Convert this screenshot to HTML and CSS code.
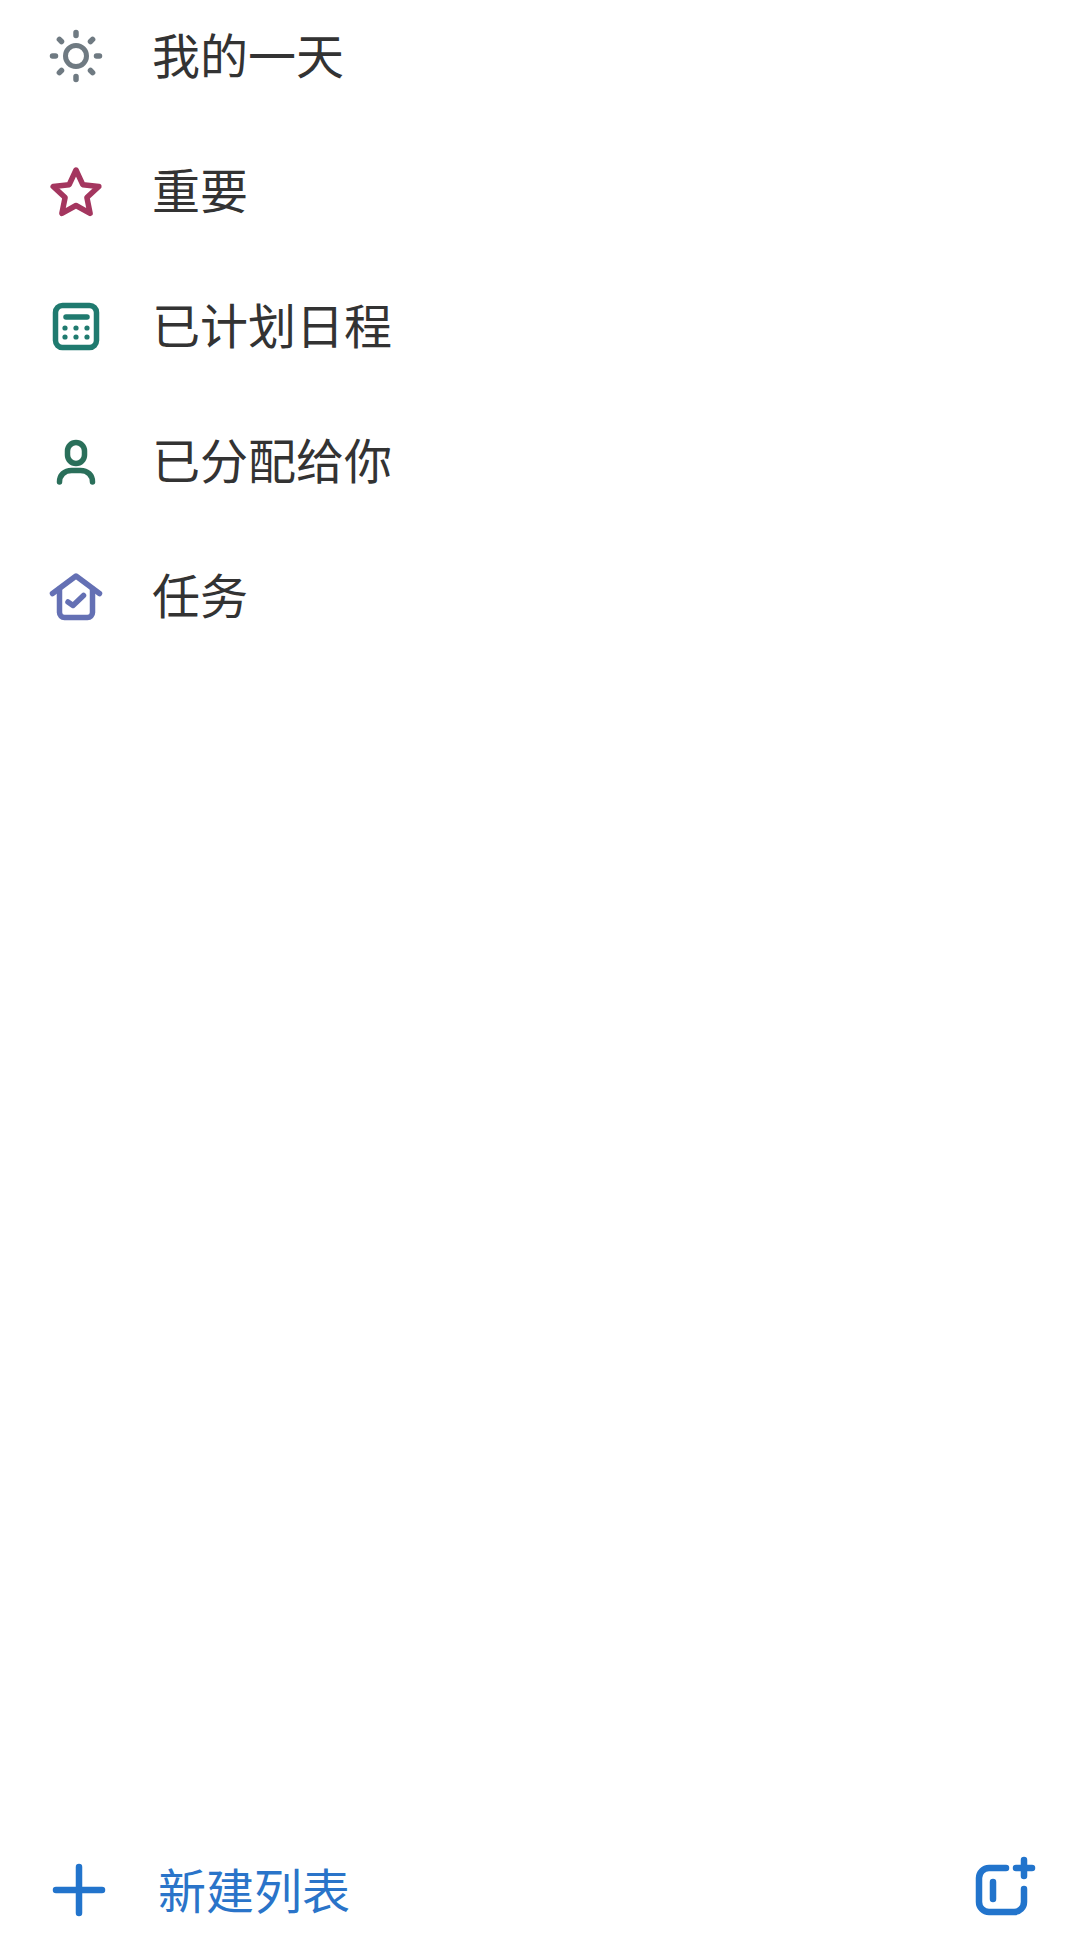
FILE: index.html
```html
<!DOCTYPE html>
<html lang="zh-CN">
<head>
<meta charset="utf-8">
<title>任务列表</title>
<link rel="stylesheet" href="styles.css">
</head>
<body>
<div class="page">
  <ul class="list">
    <li class="row">
      <svg class="icon sun" viewBox="0 0 60 60"><circle cx="30" cy="30" r="10.5"/><path d="M30 6.500v3M30 50.500v3M6.500 30h3M50.500 30h3M13.400 13.400l2.100 2.100M44.500 44.500l2.100 2.100M13.400 46.600l2.100-2.100M44.500 15.500l2.100-2.100"/></svg>
      <span class="label">我的一天</span>
    </li>
    <li class="row">
      <svg class="icon star" viewBox="0 0 60 60"><path d="M30 9l6.800 14.700 16 1.900-11.900 10.950 3.200 15.850L30 44.500l-14.100 7.900 3.200-15.850L7.200 25.600l16-1.900z"/></svg>
      <span class="label">重要</span>
    </li>
    <li class="row">
      <svg class="icon cal" viewBox="0 0 60 60"><rect x="9.500" y="9.500" width="41" height="42" rx="7"/><path class="cal-bar" d="M20 21h21"/><g class="dots"><circle cx="19" cy="32" r="2.600"/><circle cx="30" cy="32" r="2.600"/><circle cx="41" cy="32" r="2.600"/><circle cx="19" cy="41" r="2.600"/><circle cx="30" cy="41" r="2.600"/><circle cx="41" cy="41" r="2.600"/></g></svg>
      <span class="label">已计划日程</span>
    </li>
    <li class="row">
      <svg class="icon person" viewBox="0 0 60 60"><rect x="21.500" y="11.500" width="17" height="21" rx="8.500"/><path d="M13.500 51c0-7 5-11.500 12-11.500h9c7 0 12 4.500 12 11.500"/></svg>
      <span class="label">已分配给你</span>
    </li>
    <li class="row">
      <svg class="icon home" viewBox="0 0 60 60"><path d="M6.500 27.500L30 10l23.500 17.500"/><path d="M13.500 23v23.500a5 5 0 0 0 5 5h23a5 5 0 0 0 5-5V23"/><path d="M22 36l5 3.500 10.500-10"/></svg>
      <span class="label">任务</span>
    </li>
  </ul>
  <footer class="footer">
    <div class="add">
      <svg class="plus" viewBox="0 0 60 60"><path d="M30 7v46M7 30h46"/></svg>
      <span class="add-label">新建列表</span>
    </div>
    <svg class="group" viewBox="0 0 70 70"><path d="M36 13H19a10 10 0 0 0-10 10v24a10 10 0 0 0 10 10h25a10 10 0 0 0 10-10V34"/><path d="M23 27v17M46 13h16M54 5v16"/></svg>
  </footer>
</div>
</body>
</html>
```
FILE: styles.css
```css
* { box-sizing: border-box; }
html, body { margin: 0; padding: 0; background: #fff; }
body { font-family: "Noto Sans CJK SC", "Noto Sans", sans-serif; }

.page {
  width: 1080px;
  height: 1958px;
  overflow: hidden;
  display: flex;
  flex-direction: column;
  justify-content: space-between;
}

.list {
  list-style: none;
  margin: -12px 0 0;
  padding: 0;
}

.row {
  height: 135px;
  padding-left: 46px;
  display: flex;
  align-items: center;
  gap: 46px;
}

.label {
  font-size: 48px;
  line-height: 60px;
  margin-bottom: 5px;
  color: #333;
}

.icon {
  width: 60px;
  height: 60px;
  flex: none;
  fill: none;
  stroke-linecap: round;
  stroke-linejoin: round;
  stroke-width: 5.5;
}

.sun { stroke: #6f7a82; }
.sun circle { stroke-width: 5; }
.star { stroke: #a4365f; }
.cal { stroke: #1f7a6f; }
.cal .dots { fill: #1f7a6f; stroke: none; }
.person { stroke: #2a6f5a; }
.home { stroke: #6470b4; }

.footer {
  height: 136px;
  padding: 0 40px 0 49px;
  display: flex;
  align-items: center;
  justify-content: space-between;
}

.add {
  display: flex;
  align-items: center;
  gap: 49px;
}

.plus {
  width: 60px;
  height: 60px;
  fill: none;
  stroke: #2274cc;
  stroke-width: 6.5;
  stroke-linecap: round;
}

.add-label {
  font-size: 48px;
  line-height: 60px;
  margin-bottom: 4px;
  color: #2a74c9;
}

.group {
  width: 70px;
  height: 70px;
  fill: none;
  stroke: #2274cc;
  stroke-width: 6.5;
  stroke-linecap: round;
  stroke-linejoin: round;
}
```
